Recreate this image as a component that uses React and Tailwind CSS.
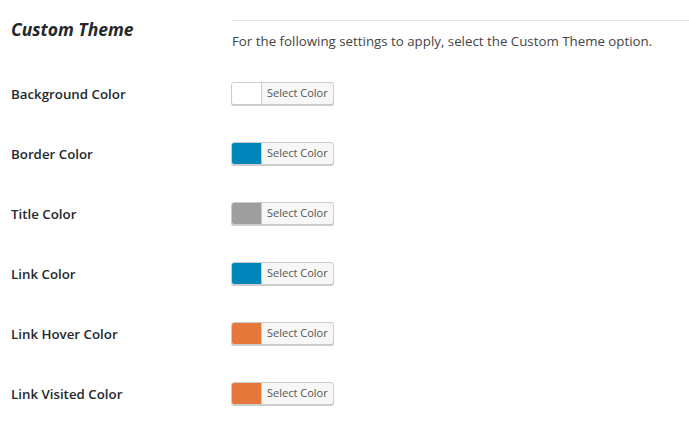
import React from "react";

const rows = [
  { label: "Background Color", color: "#ffffff" },
  { label: "Border Color", color: "#0085ba" },
  { label: "Title Color", color: "#9e9e9e" },
  { label: "Link Color", color: "#0085ba" },
  { label: "Link Hover Color", color: "#e6773a" },
  { label: "Link Visited Color", color: "#e6773a" },
];

function ColorButton({ color }) {
  return (
    <button className="flex h-[23px] items-stretch rounded-[3px] border border-[#cccccc] bg-[#f7f7f7] shadow-[0_1px_0_#cccccc] overflow-hidden">
      <span className="w-[30px] border-r border-[#cccccc]" style={{ background: color }} />
      <span className="flex items-center px-[5px] text-[11px] text-[#555555]">Select Color</span>
    </button>
  );
}

export default function App() {
  return (
    <div className="w-[689px] h-[437px] bg-white text-[#23282d] font-['Open_Sans','Noto_Sans',sans-serif] overflow-hidden">
      <div className="flex pt-[20px]">
        <div className="w-[231px] pl-[11px]">
          <h2 className="text-[17.5px] font-bold italic leading-[18px]">Custom Theme</h2>
        </div>
        <div className="flex-1 border-t border-[#e5e5e5] pt-[11px] pl-[1px]">
          <p className="text-[13.3px] text-[#444444] leading-[18px]">
            For the following settings to apply, select the Custom Theme option.
          </p>
        </div>
      </div>
      <div className="flex flex-col pt-[32px]">
        {rows.map((r) => (
          <div key={r.label} className="flex h-[60px] items-start">
            <div className="w-[231px] pl-[11px] h-[25px] flex items-center text-[13.3px] font-semibold">{r.label}</div>
            <ColorButton color={r.color} />
          </div>
        ))}
      </div>
    </div>
  );
}
